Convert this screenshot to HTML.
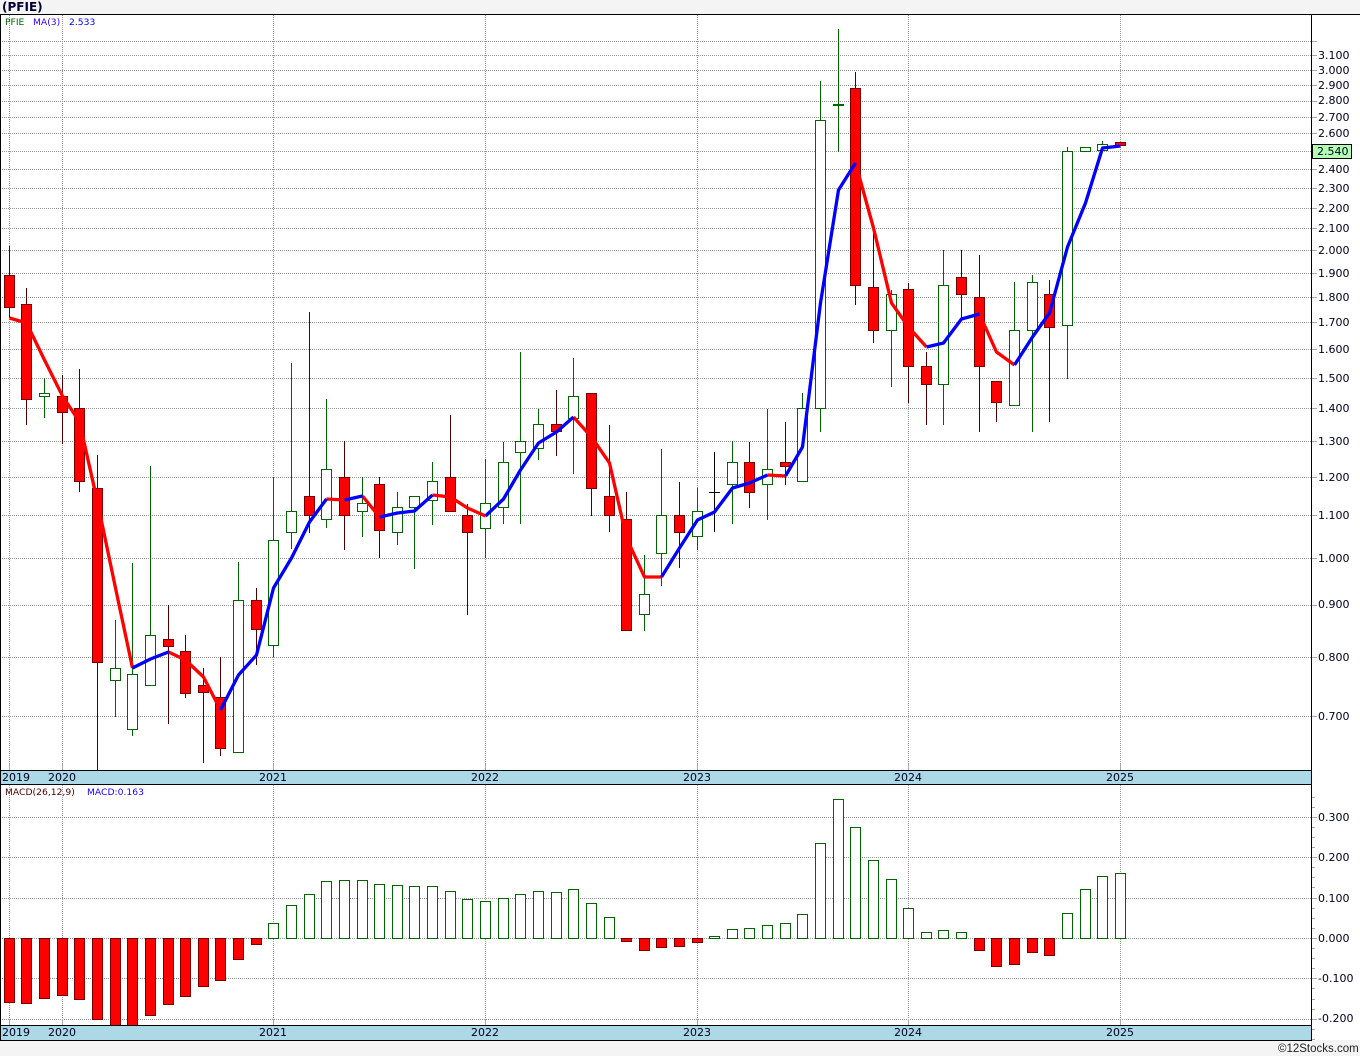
<!DOCTYPE html>
<html><head><meta charset="utf-8"><title>PFIE</title>
<style>
html,body{margin:0;padding:0;background:#f4f4f4;width:1360px;height:1056px;overflow:hidden}
svg{display:block}
text{font-family:"DejaVu Sans","Liberation Sans",sans-serif}
.ax{font-size:11px;fill:#000022}
.lg{font-size:9.2px}
</style></head><body>
<svg xmlns="http://www.w3.org/2000/svg" width="1360" height="1056" viewBox="0 0 1360 1056">
<rect x="0" y="15" width="1360" height="1025" fill="#fff"/>
<text x="2" y="11" style="font-size:12px;font-weight:bold" fill="#000033">(PFIE)</text>

<g shape-rendering="crispEdges">
<path fill="none" stroke="#989898" stroke-dasharray="1 1" d="M0 41.5H1311M0 55.5H1311M0 70.5H1311M0 85.5H1311M0 101.5H1311M0 117.5H1311M0 133.5H1311M0 151.5H1311M0 169.5H1311M0 188.5H1311M0 208.5H1311M0 228.5H1311M0 250.5H1311M0 273.5H1311M0 297.5H1311M0 322.5H1311M0 349.5H1311M0 378.5H1311M0 408.5H1311M0 441.5H1311M0 477.5H1311M0 515.5H1311M0 558.5H1311M0 605.5H1311M0 657.5H1311M0 716.5H1311M0 817.5H1311M0 857.5H1311M0 898.5H1311M0 938.5H1311M0 978.5H1311M0 1019.5H1311M9.5 15V770M62.5 15V770M273.5 15V770M485.5 15V770M697.5 15V770M908.5 15V770M1120.5 15V770M9.5 785V1019M62.5 785V1019M273.5 785V1019M485.5 785V1019M697.5 785V1019M908.5 785V1019M1120.5 785V1019"/>
<path fill="none" stroke="#a8a8a8" d="M9.5 1019V1025M62.5 1019V1025M273.5 1019V1025M485.5 1019V1025M697.5 1019V1025M908.5 1019V1025M1120.5 1019V1025M9.5 764V770M62.5 764V770M273.5 764V770M485.5 764V770M697.5 764V770M908.5 764V770M1120.5 764V770M1312 41.5H1317M1312 55.5H1317M1312 70.5H1317M1312 85.5H1317M1312 101.5H1317M1312 117.5H1317M1312 133.5H1317M1312 169.5H1317M1312 188.5H1317M1312 208.5H1317M1312 228.5H1317M1312 250.5H1317M1312 273.5H1317M1312 297.5H1317M1312 322.5H1317M1312 349.5H1317M1312 378.5H1317M1312 408.5H1317M1312 441.5H1317M1312 477.5H1317M1312 515.5H1317M1312 558.5H1317M1312 605.5H1317M1312 657.5H1317M1312 716.5H1317M1312 817.5H1317M1312 857.5H1317M1312 898.5H1317M1312 938.5H1317M1312 978.5H1317M1312 1019.5H1317M1312 797.5H1315M1312 807.5H1315M1312 827.5H1315M1312 837.5H1315M1312 847.5H1315M1312 867.5H1315M1312 877.5H1315M1312 887.5H1315M1312 908.5H1315M1312 918.5H1315M1312 928.5H1315M1312 948.5H1315M1312 958.5H1315M1312 968.5H1315M1312 988.5H1315M1312 999.5H1315M1312 1009.5H1315M1312 1029.5H1315M1312 1039.5H1315"/>

<!-- candle wicks -->
<path fill="none" stroke="#500000" d="M9.5 246V318M26.5 288V425M62.5 375V444M79.5 369V492M97.5 455V770M168.5 605V724M185.5 635V698M203.5 668V763M220.5 657V756M256.5 588V665M309.5 312V533M344.5 441V550M379.5 477V558M450.5 415V511M467.5 504V615M556.5 390V456M591.5 393V516M609.5 425V532M626.5 492V630M679.5 482V568M749.5 442V508M785.5 422V485M855.5 72V305M873.5 230V343M908.5 283V403M926.5 352V425M961.5 250V318M979.5 255V432M996.5 381V422M1049.5 280V422"/>
<path fill="none" stroke="#006400" d="M44.5 378V418M115.5 620V717M132.5 563V736M150.5 466V685M238.5 562V752M273.5 477V657M291.5 363V549M326.5 399V528M362.5 477V537M397.5 492V545M414.5 496V569M432.5 462V525M485.5 459V558M503.5 442V524M520.5 352V524M538.5 409V460M573.5 358V474M644.5 555V631M661.5 449V586M697.5 488V550M732.5 441V524M767.5 409V520M802.5 393V481M820.5 81V432M838.5 29V152M891.5 290V387M943.5 250V425M1014.5 282V405M1032.5 275V432M1067.5 147V379M1102.5 141V150"/>
<path fill="none" stroke="#000" d="M714.5 452V532M709 492.5H720"/>
<path fill="none" stroke="#006400" stroke-width="2" d="M833 105H844"/>

<!-- candle bodies -->
<path fill="#f00" stroke="#7a0000" d="M4.5 275.5h10v32h-10zM21.5 304.5h10v95h-10zM57.5 396.5h10v16h-10zM74.5 408.5h10v73h-10zM92.5 488.5h10v174h-10zM163.5 639.5h10v7h-10zM180.5 651.5h10v42h-10zM198.5 685.5h10v7h-10zM215.5 697.5h10v51h-10zM251.5 600.5h10v29h-10zM304.5 496.5h10v19h-10zM339.5 477.5h10v38h-10zM374.5 484.5h10v46h-10zM445.5 477.5h10v34h-10zM462.5 515.5h10v17h-10zM551.5 424.5h10v7h-10zM586.5 393.5h10v95h-10zM604.5 496.5h10v19h-10zM621.5 519.5h10v111h-10zM674.5 515.5h10v17h-10zM744.5 462.5h10v30h-10zM780.5 462.5h10v4h-10zM850.5 88.5h10v197h-10zM868.5 287.5h10v43h-10zM903.5 289.5h10v77h-10zM921.5 366.5h10v18h-10zM956.5 277.5h10v17h-10zM974.5 297.5h10v69h-10zM991.5 381.5h10v21h-10zM1044.5 294.5h10v33h-10zM1115.5 142.5h10v3h-10z"/>
<path fill="#fff" stroke="#006400" d="M39.5 393.5h10v3h-10zM110.5 668.5h10v12h-10zM127.5 674.5h10v55h-10zM145.5 635.5h10v50h-10zM233.5 600.5h10v152h-10zM268.5 540.5h10v105h-10zM286.5 511.5h10v21h-10zM321.5 469.5h10v50h-10zM357.5 503.5h10v8h-10zM392.5 507.5h10v25h-10zM409.5 496.5h10v11h-10zM427.5 481.5h10v19h-10zM480.5 503.5h10v25h-10zM498.5 462.5h10v45h-10zM515.5 441.5h10v11h-10zM533.5 424.5h10v24h-10zM568.5 396.5h10v22h-10zM639.5 594.5h10v20h-10zM656.5 515.5h10v38h-10zM692.5 511.5h10v25h-10zM727.5 462.5h10v22h-10zM762.5 469.5h10v15h-10zM797.5 408.5h10v73h-10zM815.5 120.5h10v288h-10zM886.5 294.5h10v36h-10zM938.5 285.5h10v99h-10zM1009.5 330.5h10v75h-10zM1027.5 282.5h10v48h-10zM1062.5 151.5h10v174h-10zM1080.5 147.5h10v4h-10zM1097.5 144.5h10v6h-10z"/>

<!-- MACD bars -->
<path fill="#f00" stroke="#7a0000" d="M4.5 938.5h10V1002.5h-10zM21.5 938.5h10V1003.5h-10zM39.5 938.5h10V998.5h-10zM57.5 938.5h10V995.5h-10zM74.5 938.5h10V999.5h-10zM92.5 938.5h10V1019.5h-10zM110.5 938.5h10V1025.5h-10zM127.5 938.5h10V1025.5h-10zM145.5 938.5h10V1015.5h-10zM163.5 938.5h10V1004.5h-10zM180.5 938.5h10V996.5h-10zM198.5 938.5h10V986.5h-10zM215.5 938.5h10V980.5h-10zM233.5 938.5h10V959.5h-10zM251.5 938.5h10V944.5h-10zM621.5 938.5h10V941.5h-10zM639.5 938.5h10V950.5h-10zM656.5 938.5h10V947.5h-10zM674.5 938.5h10V946.5h-10zM692.5 938.5h10V942.5h-10zM974.5 938.5h10V950.5h-10zM991.5 938.5h10V966.5h-10zM1009.5 938.5h10V964.5h-10zM1027.5 938.5h10V952.5h-10zM1044.5 938.5h10V955.5h-10z"/>
<path fill="#fff" stroke="#006400" d="M268.5 923.5h10V938.5h-10zM286.5 905.5h10V938.5h-10zM304.5 894.5h10V938.5h-10zM321.5 881.5h10V938.5h-10zM339.5 880.5h10V938.5h-10zM357.5 880.5h10V938.5h-10zM374.5 884.5h10V938.5h-10zM392.5 885.5h10V938.5h-10zM409.5 886.5h10V938.5h-10zM427.5 886.5h10V938.5h-10zM445.5 891.5h10V938.5h-10zM462.5 899.5h10V938.5h-10zM480.5 901.5h10V938.5h-10zM498.5 898.5h10V938.5h-10zM515.5 894.5h10V938.5h-10zM533.5 891.5h10V938.5h-10zM551.5 892.5h10V938.5h-10zM568.5 889.5h10V938.5h-10zM586.5 903.5h10V938.5h-10zM604.5 917.5h10V938.5h-10zM709.5 936.5h10V938.5h-10zM727.5 929.5h10V938.5h-10zM744.5 928.5h10V938.5h-10zM762.5 925.5h10V938.5h-10zM780.5 923.5h10V938.5h-10zM797.5 914.5h10V938.5h-10zM815.5 843.5h10V938.5h-10zM833.5 799.5h10V938.5h-10zM850.5 827.5h10V938.5h-10zM868.5 860.5h10V938.5h-10zM886.5 879.5h10V938.5h-10zM903.5 908.5h10V938.5h-10zM921.5 932.5h10V938.5h-10zM938.5 930.5h10V938.5h-10zM956.5 932.5h10V938.5h-10zM1062.5 913.5h10V938.5h-10zM1080.5 889.5h10V938.5h-10zM1097.5 876.5h10V938.5h-10zM1115.5 873.5h10V938.5h-10z"/>
</g>

<!-- MA(3) -->
<g fill="none" stroke-width="3.3" stroke-linejoin="round" stroke-linecap="butt">
<path stroke="#f00" d="M9.5 318L26.5 323L44.5 360L62.5 396L79.5 422L97.5 502L115.5 588L132.5 668M168.5 652L185.5 660L203.5 677L220.5 710M326.5 499L344.5 500M362.5 496L379.5 517M432.5 495L450.5 497L467.5 508L485.5 516M573.5 417L591.5 437L609.5 463L626.5 538L644.5 577L661.5 577M767.5 475L785.5 476M855.5 163L873.5 228L891.5 303L908.5 327L926.5 347M979.5 314L996.5 352L1014.5 365"/>
<path stroke="#00f" d="M132.5 668L150.5 659L168.5 652M220.5 710L238.5 675L256.5 655L273.5 588L291.5 558L309.5 522L326.5 499M344.5 500L362.5 496M379.5 517L397.5 513L414.5 511L432.5 495M485.5 516L503.5 499L520.5 470L538.5 443L556.5 432L573.5 417M661.5 577L679.5 548L697.5 520L714.5 512L732.5 488L749.5 483L767.5 475M785.5 476L802.5 447L820.5 303L838.5 190L855.5 163M926.5 347L943.5 343L961.5 319L979.5 314M1014.5 365L1032.5 337L1049.5 313L1067.5 247L1085.5 203L1102.5 148L1120.5 146"/>
</g>

<!-- bands + frame -->
<g shape-rendering="crispEdges">
<rect x="0" y="770" width="1311" height="15" fill="#add8e6"/>
<rect x="0" y="1025" width="1311" height="15" fill="#add8e6"/>
<path fill="none" stroke="#000" d="M0 14.5H1360M0 770.5H1311M0 784.5H1311M0 1025.5H1311M0 1040.5H1312M0.5 14V1040M1311.5 14V1040"/>
<rect x="1312.5" y="144.5" width="39" height="14" fill="#b4ffb4" stroke="#000"/>
</g>

<!-- legends -->
<text class="lg" x="5" y="25" fill="#006400">PFIE</text>
<text class="lg" x="33" y="25" fill="#3300ee">MA(3)</text>
<text class="lg" x="69" y="25" fill="#0000ff">2.533</text>
<text class="lg" x="5" y="795" fill="#500000">MACD(26,12,9)</text>
<text class="lg" x="87" y="795" fill="#2200ff">MACD:0.163</text>

<!-- years -->
<g class="ax">
<text class="ax" x="2" y="781">2019</text><text class="ax" x="48" y="781">2020</text><text class="ax" x="259" y="781">2021</text><text class="ax" x="471" y="781">2022</text><text class="ax" x="683" y="781">2023</text><text class="ax" x="894" y="781">2024</text><text class="ax" x="1106" y="781">2025</text>
<text class="ax" x="2" y="1036">2019</text><text class="ax" x="48" y="1036">2020</text><text class="ax" x="259" y="1036">2021</text><text class="ax" x="471" y="1036">2022</text><text class="ax" x="683" y="1036">2023</text><text class="ax" x="894" y="1036">2024</text><text class="ax" x="1106" y="1036">2025</text>
</g>

<!-- axis labels -->
<g>
<text class="ax" x="1318" y="59">3.100</text>
<text class="ax" x="1318" y="74">3.000</text>
<text class="ax" x="1318" y="89">2.900</text>
<text class="ax" x="1318" y="104">2.800</text>
<text class="ax" x="1318" y="121">2.700</text>
<text class="ax" x="1318" y="137">2.600</text>
<text class="ax" x="1317" y="155">2.540</text>
<text class="ax" x="1318" y="173">2.400</text>
<text class="ax" x="1318" y="192">2.300</text>
<text class="ax" x="1318" y="212">2.200</text>
<text class="ax" x="1318" y="232">2.100</text>
<text class="ax" x="1318" y="254">2.000</text>
<text class="ax" x="1318" y="277">1.900</text>
<text class="ax" x="1318" y="301">1.800</text>
<text class="ax" x="1318" y="326">1.700</text>
<text class="ax" x="1318" y="353">1.600</text>
<text class="ax" x="1318" y="382">1.500</text>
<text class="ax" x="1318" y="412">1.400</text>
<text class="ax" x="1318" y="445">1.300</text>
<text class="ax" x="1318" y="481">1.200</text>
<text class="ax" x="1318" y="519">1.100</text>
<text class="ax" x="1318" y="562">1.000</text>
<text class="ax" x="1318" y="608">0.900</text>
<text class="ax" x="1318" y="661">0.800</text>
<text class="ax" x="1318" y="720">0.700</text>
<text class="ax" x="1318" y="821">0.300</text>
<text class="ax" x="1318" y="861">0.200</text>
<text class="ax" x="1318" y="902">0.100</text>
<text class="ax" x="1318" y="942">0.000</text>
<text class="ax" x="1318" y="982">-0.100</text>
<text class="ax" x="1318" y="1022">-0.200</text>
</g>
<text x="1278" y="1052" style="font-family:'Liberation Sans',sans-serif;font-size:11.5px" fill="#222">©12Stocks.com</text>
</svg>
</body></html>
